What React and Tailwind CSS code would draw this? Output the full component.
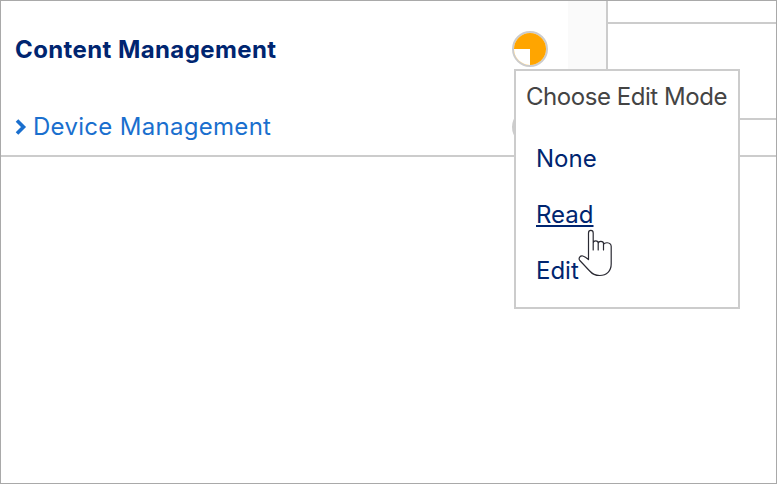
import React from 'react';

const HandCursor = () => (
  <svg className="absolute left-[62px] top-[157px]" width="36" height="50" viewBox="0 0 36 50" fill="white" stroke="#2a2a33" strokeWidth="1.2" strokeLinejoin="round">
    <path d="M10.500 26V5c0-3.400 4.700-3.400 4.700 0V22V15c0-2.800 5-2.800 5 0V22V15.500c0-2.800 5.300-2.800 5.300 0V22V17c0-3 7.500-3.500 7.700 1.500V36c0 7-4.500 11.500-11.500 11.500c-4.500 0-7.500-1.500-10-4.500L1.800 32.500c-1.800-2.500 .5-5 3-4.500c2 .5 4 2 5.700 3.500Z" />
  </svg>
);

const StatusDot = ({ filled }) => (
  <div className="relative w-[36px] h-[36px] rounded-full border-2 border-[#cccccc] bg-white overflow-hidden shrink-0">
    {filled && (
      <>
        <div className="w-full h-full bg-[#ffa500]" />
        <div className="absolute left-0 bottom-0 w-[16px] h-[16px] bg-white" />
      </>
    )}
  </div>
);

export default function App() {
  return (
    <div className="w-[777px] h-[484px] bg-white border border-[#a9a9a9] overflow-hidden" style={{ fontFamily: 'Inter, "Noto Sans", sans-serif' }}>
      <div className="flex h-[156px] border-b-2 border-[#cccccc]">
        {/* Permission rows */}
        <div className="w-[567px] flex flex-col">
          <div className="flex items-start justify-between pl-[14px] pr-[20px] pt-[30px]">
            <h2 className="text-[24px] leading-[37px] font-bold tracking-[0.4px] text-[#002570]">Content Management</h2>
            <StatusDot filled />
          </div>
          <div className="flex items-center justify-between pl-[14px] pr-[20px] mt-[40px]">
            <a className="flex items-center gap-[6px] text-[24px] leading-[37px] tracking-[0.3px] text-[#1a6fce]">
              <svg width="12" height="18" viewBox="0 0 12 18" fill="none" stroke="#1a6fce" strokeWidth="3.600"><path d="M2 2.500l6.500 6.500-6.500 6.500" /></svg>
              Device Management
            </a>
            <StatusDot />
          </div>
        </div>

        <div className="w-[38px] bg-[#fafafa]" />

        {/* Right table */}
        <div className="flex-1 flex flex-col border-l-2 border-[#cccccc]">
          <div className="h-[23px] border-b-2 border-[#cccccc]" />
          <div className="h-[96px] border-b-2 border-[#cccccc]" />
        </div>
      </div>

      {/* Edit mode menu */}
      <div className="absolute left-[514px] top-[69px] w-[226px] h-[240px] bg-white border-2 border-[#cccccc] text-[24px] leading-[32px]">
        <p className="absolute left-[10px] top-[10px] tracking-[-0.45px] text-[#444444] whitespace-nowrap">Choose Edit Mode</p>
        <ul className="pt-[72px] pl-[20px] flex flex-col gap-[24px] text-[#002570]">
          <li>None</li>
          <li className="underline">Read</li>
          <li>Edit</li>
        </ul>
        <HandCursor />
      </div>
    </div>
  );
}
